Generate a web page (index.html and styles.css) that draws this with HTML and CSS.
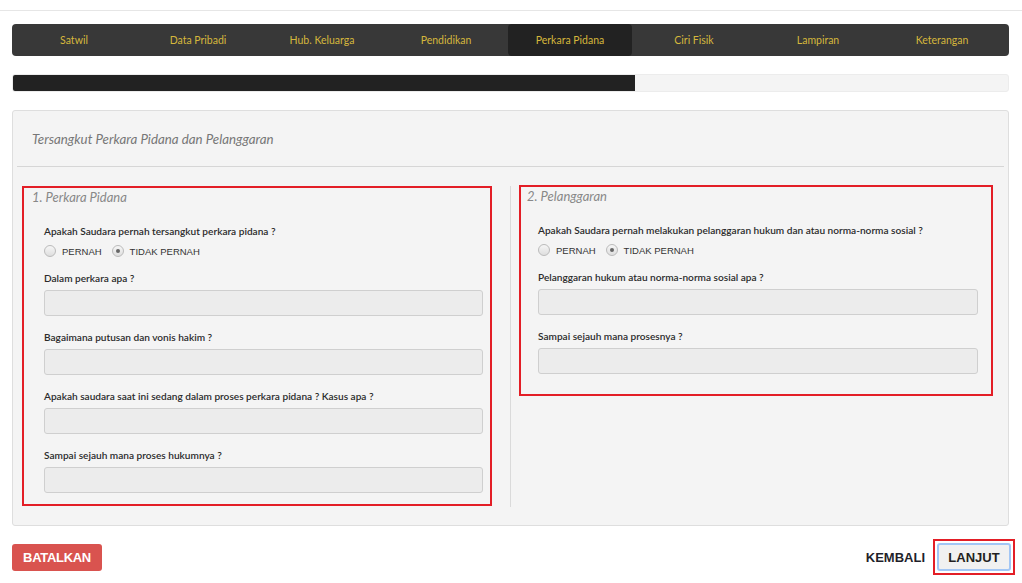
FILE: index.html
```html
<!DOCTYPE html>
<html lang="id">
<head>
<meta charset="utf-8">
<title>Perkara Pidana</title>
<link rel="stylesheet" href="styles.css">
</head>
<body>
<div class="topline"></div>
<div class="wrap">
  <nav class="tabs">
    <a class="tab">Satwil</a>
    <a class="tab">Data Pribadi</a>
    <a class="tab">Hub. Keluarga</a>
    <a class="tab">Pendidikan</a>
    <a class="tab active">Perkara Pidana</a>
    <a class="tab">Ciri Fisik</a>
    <a class="tab">Lampiran</a>
    <a class="tab">Keterangan</a>
  </nav>

  <div class="progress"><div class="progress-bar" style="width:62.5%"></div></div>

  <section class="panel">
    <div class="panel-head">Tersangkut Perkara Pidana dan Pelanggaran</div>
    <div class="panel-rule"></div>
    <div class="panel-body">
      <div class="col col-left">
        <div class="box box-left">
          <div class="box-title">1. Perkara Pidana</div>
          <div class="group">
            <div class="label">Apakah Saudara pernah tersangkut perkara pidana ?</div>
            <div class="radios">
              <span class="radio"></span><span class="rtext">PERNAH</span>
              <span class="radio checked"></span><span class="rtext">TIDAK PERNAH</span>
            </div>
          </div>
          <div class="group">
            <div class="label">Dalam perkara apa ?</div>
            <div class="input"></div>
          </div>
          <div class="group">
            <div class="label">Bagaimana putusan dan vonis hakim ?</div>
            <div class="input"></div>
          </div>
          <div class="group">
            <div class="label">Apakah saudara saat ini sedang dalam proses perkara pidana ? Kasus apa ?</div>
            <div class="input"></div>
          </div>
          <div class="group">
            <div class="label">Sampai sejauh mana proses hukumnya ?</div>
            <div class="input"></div>
          </div>
        </div>
      </div>
      <div class="col col-right">
        <div class="box box-right">
          <div class="box-title">2. Pelanggaran</div>
          <div class="group">
            <div class="label">Apakah Saudara pernah melakukan pelanggaran hukum dan atau norma-norma sosial ?</div>
            <div class="radios">
              <span class="radio"></span><span class="rtext">PERNAH</span>
              <span class="radio checked"></span><span class="rtext">TIDAK PERNAH</span>
            </div>
          </div>
          <div class="group">
            <div class="label">Pelanggaran hukum atau norma-norma sosial apa ?</div>
            <div class="input"></div>
          </div>
          <div class="group">
            <div class="label">Sampai sejauh mana prosesnya ?</div>
            <div class="input"></div>
          </div>
        </div>
      </div>
    </div>
  </section>

  <footer class="actions">
    <button class="btn btn-danger">BATALKAN</button>
    <div class="right">
      <span class="link">KEMBALI</span>
      <span class="hl"><button class="btn btn-next">LANJUT</button></span>
    </div>
  </footer>
</div>
</body>
</html>
```

FILE: styles.css
```css
* { box-sizing: border-box; }
html, body { margin: 0; padding: 0; background: #fff; }
body { font-family: Lato, "Open Sans", sans-serif; color: #333; width: 1022px; height: 583px; overflow: hidden; }

.topline { height: 11px; border-bottom: 1px solid #e6e6e6; }

.wrap { padding: 13px 13px 0 12px; }

.tabs {
  display: grid;
  grid-template-columns: repeat(8, 124px);
  height: 32px;
  background: #383838;
  border-radius: 4px;
}
.tab {
  display: flex;
  align-items: center;
  justify-content: center;
  font-size: 10.5px;
  color: #d5b73c;
  border-radius: 4px;
}
.tab.active { background: #222222; }

.progress {
  margin-top: 18px;
  height: 18px;
  background: #f4f4f4;
  border: 1px solid #ececec;
  border-radius: 3px;
  overflow: hidden;
}
.progress-bar { height: 100%; background: #222222; }

.panel {
  margin-top: 18px;
  height: 416px;
  background: #f4f4f4;
  border: 1px solid #dedede;
  border-radius: 3px;
}
.panel-head {
  padding: 20px 0 0 19px;
  height: 55px;
  font-size: 13.3px;
  font-style: italic;
  color: #777;
  line-height: 16px;
}
.panel-rule { height: 1px; background: #d6d6d6; margin: 0 4px; }

.panel-body {
  display: grid;
  grid-template-columns: 497px 1fr;
  padding-top: 19px;
}
.col-left { padding: 0 18px 0 9px; }
.col-right { border-left: 1px solid #dadada; padding: 0 15px 0 8px; height: 321px; }

.box { border: 2px solid #e31e26; }
.box-left { height: 320px; padding: 0 7px 0 20px; }
.box-right { height: 211px; padding: 0 13px 0 17px; margin-top: -1px; }

.box-title {
  margin-left: -12px;
  height: 18px;
  line-height: 18px;
  font-size: 13px;
  font-style: italic;
  color: #888;
}
.box-right .box-title { margin-left: -11px; }

.group { margin-top: 17px; }
.group + .group { margin-top: 11px; }
.group:nth-of-type(n+4) { margin-top: 13px; }

.label {
  font-size: 10.1px;
  line-height: 16px;
  color: #2b2b2b;
  font-weight: 600;
}
.radios {
  display: flex;
  align-items: center;
  height: 16px;
  margin-top: 4px;
}
.radio {
  width: 12px; height: 12px;
  border-radius: 50%;
  border: 1px solid #bbbbbb;
  background: linear-gradient(#f6f6f6, #dedede);
  position: relative;
  flex: none;
}
.radio.checked::after {
  content: "";
  position: absolute;
  left: 3px; top: 3px;
  width: 4px; height: 4px;
  border-radius: 50%;
  background: #666;
}
.rtext {
  font-family: "Liberation Sans", Arial, sans-serif;
  font-size: 9.5px;
  color: #333;
  margin-left: 6px;
  margin-right: 10px;
}
.input {
  margin-top: 4px;
  height: 26px;
  background: #ececec;
  border: 1px solid #cfcfcf;
  border-radius: 3px;
}

.actions {
  display: flex;
  justify-content: space-between;
  align-items: center;
  margin-top: 13px;
  margin-right: -6px;
}
.btn {
  font-family: "Liberation Sans", Arial, sans-serif;
  font-weight: bold;
  font-size: 13px;
  border-radius: 3px;
  cursor: pointer;
}
.btn-danger {
  width: 90px; height: 27px;
  background: #d9534f;
  color: #fff;
  border: none;
  padding: 0;
  letter-spacing: -0.3px;
}
.right { display: flex; align-items: center; }
.link {
  font-family: "Liberation Sans", Arial, sans-serif;
  font-weight: bold;
  font-size: 13px;
  color: #1f1f2b;
  margin-right: 8px;
}
.hl {
  display: flex;
  border: 2px solid #e31e26;
  padding: 2px;
}
.btn-next {
  width: 74px; height: 28px;
  background: #f1f1f1;
  border: 2px solid #a2c6f5;
  color: #231f20;
  padding: 0;
}
```
